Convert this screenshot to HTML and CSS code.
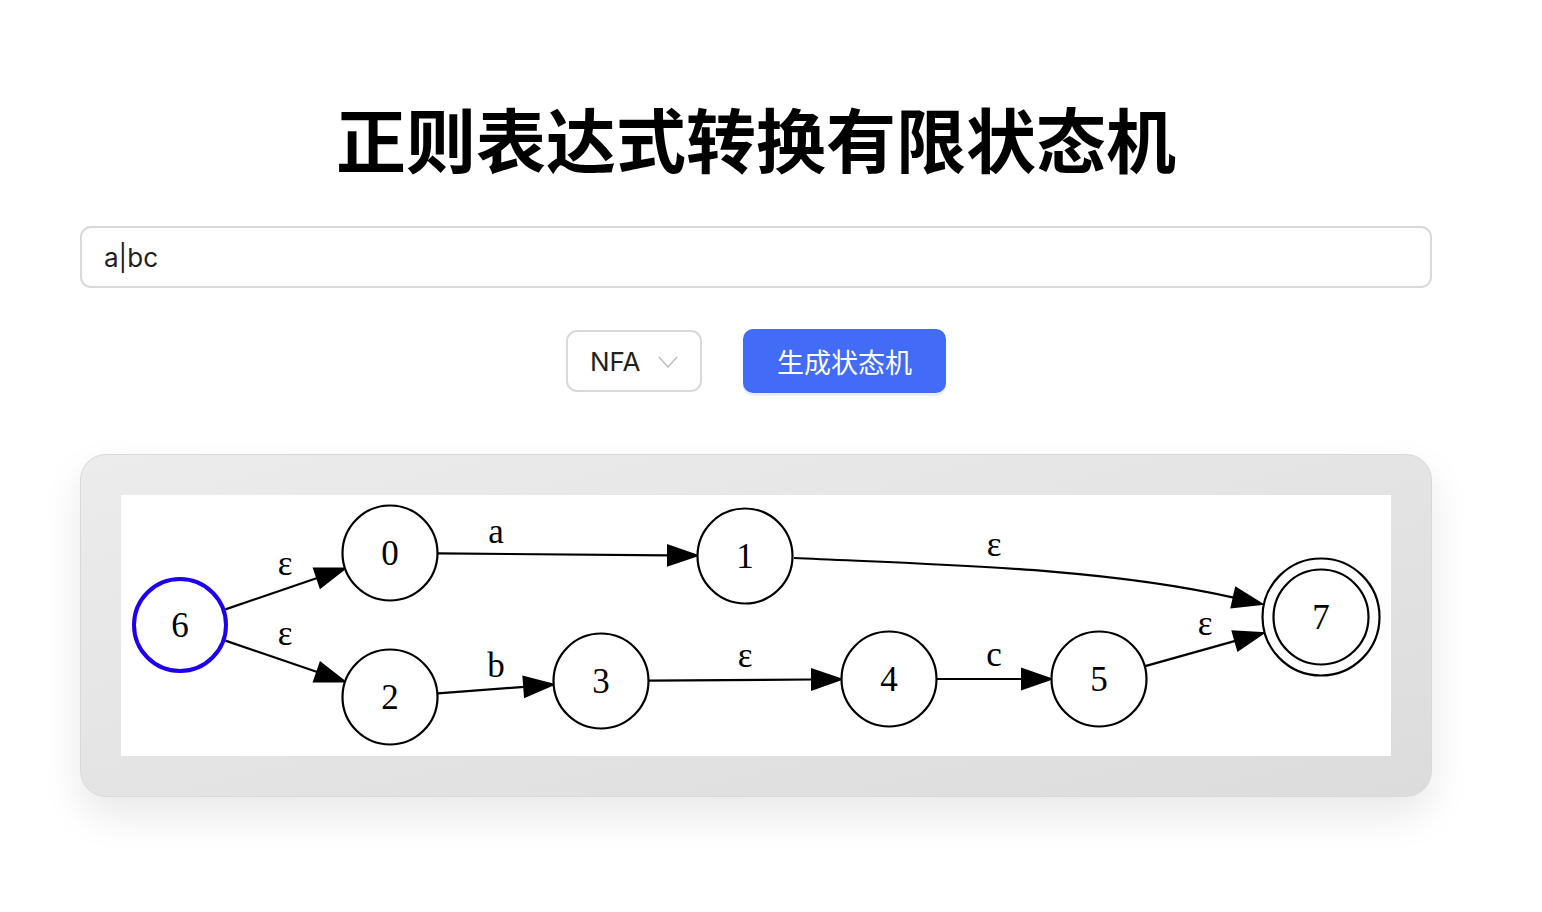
FILE: index.html
```html
<!DOCTYPE html>
<html lang="zh">
<head>
<meta charset="utf-8">
<title>正则表达式转换有限状态机</title>
<link rel="stylesheet" href="styles.css">
</head>
<body>
<div class="page">
  <h1 class="title">正则表达式转换有限状态机</h1>
  <input class="regex-input" type="text" value="a|bc">
  <div class="controls">
    <div class="select">
      <span class="select-value">NFA</span>
      <svg class="chevron" width="20" height="12" viewBox="0 0 20 12"><path d="M1 1 L10 11 L19 1" fill="none" stroke="#bfbfbf" stroke-width="1.6"/></svg>
    </div>
    <button class="btn-primary">生成状态机</button>
  </div>
  <div class="panel">
    <svg class="graph" width="1270" height="261" viewBox="0 0 1270 261">
      <g fill="none" stroke="#000" stroke-width="2.2">
        <path d="M104.4 114.4 L196.2 83.0"/>
        <path d="M104.4 145.6 L196.2 177.0"/>
        <path d="M317 58.4 L547 60.35"/>
        <path d="M316.9 198.4 L403.2 191.8"/>
        <path d="M528 185.7 L691 184.5"/>
        <path d="M816 184 L901 184"/>
        <path d="M1024.2 171.1 L1114.3 145.9"/>
        <path d="M673 63 C823 70 980 72.7 1112.7 102.6"/>
      </g>
      <g fill="#000" stroke="#000" stroke-width="2">
        <polygon points="223.6,73.6 199.4,92.5 193.0,73.5"/>
        <polygon points="223.6,186.4 192.96,186.46 199.44,167.54"/>
        <polygon points="576,60.6 547,70.35 547,50.35"/>
        <polygon points="432.1,189.6 403.96,201.77 402.44,181.83"/>
        <polygon points="720,184.3 691,194.5 691,174.5"/>
        <polygon points="930,184 901,194 901,174"/>
        <polygon points="1142.2,138.1 1117.0,155.5 1111.6,136.3"/>
        <polygon points="1141,109 1110.5,112.35 1114.9,92.85"/>
      </g>
      <g fill="#fff" stroke="#000" stroke-width="2.2">
        <circle cx="269" cy="58" r="47.5"/>
        <circle cx="624" cy="61" r="47.5"/>
        <circle cx="269" cy="202" r="47.5"/>
        <circle cx="480" cy="186" r="47.5"/>
        <circle cx="768" cy="184" r="47.5"/>
        <circle cx="978" cy="184" r="47.5"/>
        <circle cx="1200" cy="122" r="58.5"/>
        <circle cx="1200" cy="122" r="47.5"/>
        <circle cx="59" cy="130" r="46" stroke="#1f00ee" stroke-width="4"/>
      </g>
      <g class="node-label" text-anchor="middle">
        <text x="59" y="142">6</text>
        <text x="269" y="70">0</text>
        <text x="624" y="73">1</text>
        <text x="269" y="214">2</text>
        <text x="480" y="198">3</text>
        <text x="768" y="196">4</text>
        <text x="978" y="196">5</text>
        <text x="1200" y="134">7</text>
      </g>
      <g class="edge-label" text-anchor="middle">
        <text x="164" y="80">ε</text>
        <text x="164" y="150">ε</text>
        <text x="375" y="48">a</text>
        <text x="375" y="182">b</text>
        <text x="624" y="172">ε</text>
        <text x="873" y="171">c</text>
        <text x="1084" y="140">ε</text>
        <text x="873" y="61">ε</text>
      </g>
    </svg>
  </div>
</div>
</body>
</html>
```
FILE: styles.css
```css
* { box-sizing: border-box; }
html, body { margin: 0; padding: 0; background: #fff; }
body {
  font-family: Inter, "Noto Sans", "Noto Sans CJK SC", sans-serif;
  color: #1f1f1f;
}
.page {
  width: 1352px;
  margin-left: 80px;
  display: flex;
  flex-direction: column;
  padding-bottom: 60px;
}
.title {
  margin: 96px 0 0;
  height: 84px;
  line-height: 84px;
  font-size: 70px;
  font-weight: 700;
  text-align: center;
  color: #000;
  font-family: "Noto Sans CJK SC", sans-serif;
}
.regex-input {
  margin-top: 46px;
  width: 100%;
  height: 62px;
  border: 2px solid #d9d9d9;
  border-radius: 11px;
  padding: 0 22px;
  font-family: Inter, "Noto Sans", sans-serif;
  font-size: 26px;
  color: #1f1f1f;
  outline: none;
  background: #fff;
}
.controls {
  margin-top: 41px;
  display: flex;
  justify-content: center;
  align-items: center;
  gap: 41px;
}
.select {
  width: 136px;
  height: 62px;
  border: 2px solid #d9d9d9;
  border-radius: 11px;
  display: flex;
  align-items: center;
  padding-left: 22px;
  gap: 17px;
  background: #fff;
}
.select-value {
  font-size: 26px;
  color: #1f1f1f;
}
.chevron { display: block; margin-top: 1px; }
.btn-primary {
  width: 203px;
  height: 64px;
  border: none;
  border-radius: 10px;
  background: #426cf6;
  color: #fff;
  font-family: "Noto Sans CJK SC", sans-serif;
  font-size: 27px;
  box-shadow: 0 3px 0 rgba(66, 108, 246, 0.12);
  padding: 0;
}
.panel {
  margin-top: 61px;
  width: 100%;
  border: 1px solid #d8d8d8;
  border-radius: 26px;
  background: linear-gradient(to bottom right, #ececec, #dcdcdc);
  padding: 40px;
  box-shadow: 0 18px 40px rgba(0, 0, 0, 0.09);
}
.graph {
  display: block;
  background: #fff;
}
.node-label text, .edge-label text {
  font-family: "Liberation Serif", "Times New Roman", serif;
  font-size: 35px;
  fill: #000;
}
```
